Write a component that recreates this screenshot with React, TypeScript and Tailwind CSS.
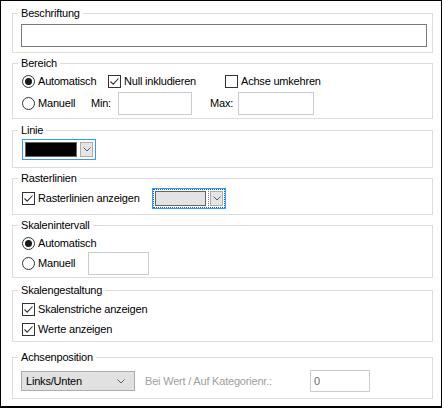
import type { ReactNode } from 'react';

/**
 * Achsen-Eigenschaften dialog page (Windows group-box look)
 */

function Group({ title, className, children }: { title: string; className: string; children: ReactNode }) {
  return (
    <div className={`relative border border-[#dcdcdc] ${className}`}>
      <span className="absolute -top-[7px] left-[5px] bg-white px-[3px] leading-[13px]">{title}</span>
      {children}
    </div>
  );
}

function Radio({ checked, label, className }: { checked?: boolean; label: string; className?: string }) {
  return (
    <div className={`flex h-[16px] items-center ${className ?? ''}`}>
      <span className="flex h-[13px] w-[13px] shrink-0 items-center justify-center rounded-full border border-[#333333] bg-white">
        {checked && <span className="h-[7px] w-[7px] rounded-full bg-[#1a1a1a]" />}
      </span>
      <span className="ml-[3px] whitespace-nowrap">{label}</span>
    </div>
  );
}

function Check({ checked, label, className }: { checked?: boolean; label: string; className?: string }) {
  return (
    <div className={`flex h-[16px] items-center ${className ?? ''}`}>
      <span className="flex h-[13px] w-[13px] shrink-0 items-center justify-center border border-[#333333] bg-white">
        {checked && (
          <svg width="11" height="11" viewBox="0 0 11 11">
            <path d="M1.5 5.5 L4.2 8.2 L9.5 2.5" fill="none" stroke="#333333" strokeWidth="1.1" />
          </svg>
        )}
      </span>
      <span className="ml-[3px] whitespace-nowrap">{label}</span>
    </div>
  );
}

function Chevron() {
  return (
    <svg width="8" height="5" viewBox="0 0 8 5">
      <path d="M0.5 0.5 L4 4 L7.5 0.5" fill="none" stroke="#606060" strokeWidth="1" />
    </svg>
  );
}

function ColorCombo({ swatch, focused }: { swatch: string; focused?: boolean }) {
  return (
    <div className="flex h-[21px] w-[74px] border border-[#3399ff]">
      <div
        className={`flex flex-1 items-stretch p-[1px] ${focused ? 'border border-dotted border-[#1560c0]' : 'border border-transparent'}`}
      >
        <div className={`flex-1 border border-[#646464] ${swatch}`} />
        <div className={`ml-[2px] flex ${focused ? 'border-l border-dotted border-[#808080] pl-[1px]' : 'pl-[1px]'}`}>
          <div className="flex w-[13px] items-center justify-center border border-[#adadad] bg-[#e5e5e5]">
            <Chevron />
          </div>
        </div>
      </div>
    </div>
  );
}

function TextBox({ className, value, dark }: { className: string; value?: string; dark?: boolean }) {
  return (
    <div
      className={`flex items-center bg-white pl-[3px] ${dark ? 'border border-[#7a7a7a]' : 'border border-[#cccccc]'} ${className}`}
    >
      {value && <span className="text-[#6d6d6d]">{value}</span>}
    </div>
  );
}

function App() {
  return (
    <div
      className="h-[410px] w-[444px] bg-white text-[11px] tracking-[-0.2px] text-black"
      style={{ fontFamily: '"Liberation Sans", Arial, sans-serif' }}
    >
      <div className="flex h-[408px] w-[442px] flex-col border border-b-2 border-black pl-[11px] pr-[8px]">
        {/* Beschriftung */}
        <Group title="Beschriftung" className="mt-[12px] h-[40px] pl-[8px] pr-[5px] pt-[10px]">
          <TextBox className="h-[23px] w-full" dark />
        </Group>

        {/* Bereich */}
        <Group title="Bereich" className="mt-[10px] h-[56px] pl-[9px] pt-[9px]">
          <div className="flex">
            <Radio checked label="Automatisch" className="w-[86px]" />
            <Check checked label="Null inkludieren" className="w-[117px]" />
            <Check label="Achse umkehren" />
          </div>
          <div className="mt-[3px] flex h-[23px] items-center">
            <Radio label="Manuell" className="w-[69px]" />
            <span className="w-[27px]">Min:</span>
            <TextBox className="h-[23px] w-[74px]" />
            <span className="ml-[18px] w-[28px]">Max:</span>
            <TextBox className="h-[23px] w-[76px]" />
          </div>
        </Group>

        {/* Linie */}
        <Group title="Linie" className="mt-[11px] h-[38px] pl-[9px] pt-[8px]">
          <ColorCombo swatch="bg-black" />
        </Group>

        {/* Rasterlinien */}
        <Group title="Rasterlinien" className="mt-[10px] h-[37px] pl-[9px] pt-[9px]">
          <div className="flex h-[21px] items-center">
            <Check checked label="Rasterlinien anzeigen" className="w-[130px]" />
            <ColorCombo swatch="bg-[#e3e3e3]" focused />
          </div>
        </Group>

        {/* Skalenintervall */}
        <Group title="Skalenintervall" className="mt-[10px] h-[53px] pl-[9px] pt-[9px]">
          <Radio checked label="Automatisch" />
          <div className="mt-[1px] flex h-[23px] items-center">
            <Radio label="Manuell" className="w-[66px]" />
            <TextBox className="h-[23px] w-[61px]" />
          </div>
        </Group>

        {/* Skalengestaltung */}
        <Group title="Skalengestaltung" className="mt-[12px] h-[52px] pl-[9px] pt-[10px]">
          <Check checked label="Skalenstriche anzeigen" />
          <Check checked label="Werte anzeigen" className="mt-[4px]" />
        </Group>

        {/* Achsenposition */}
        <Group title="Achsenposition" className="mt-[15px] h-[42px] pl-[8px] pt-[12px]">
          <div className="flex h-[22px] items-center">
            <div className="flex h-[20px] w-[114px] items-center justify-between border border-[#adadad] bg-[#e1e1e1] pl-[4px] pr-[9px]">
              <span>Links/Unten</span>
              <Chevron />
            </div>
            <span className="ml-[10px] w-[165px] text-[#a0a0a0]">Bei Wert / Auf Kategorienr.:</span>
            <TextBox className="h-[22px] w-[60px]" value="0" />
          </div>
        </Group>
      </div>
    </div>
  );
}

export default App;
